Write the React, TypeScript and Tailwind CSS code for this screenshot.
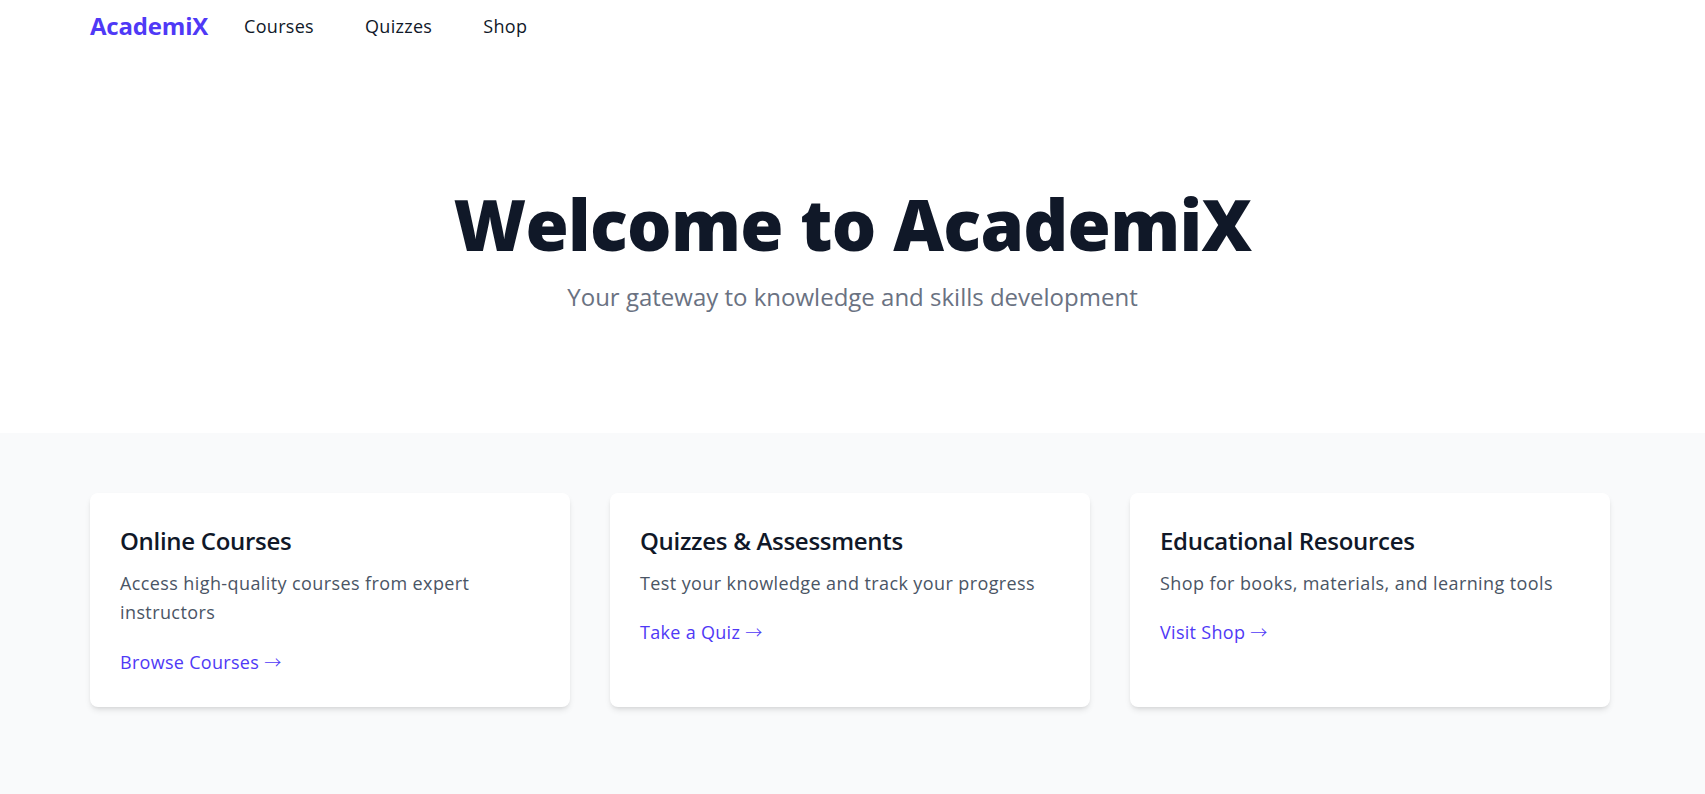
import React from "react";

const cards = [
  {
    title: "Online Courses",
    desc: "Access high-quality courses from expert instructors",
    link: "Browse Courses",
  },
  {
    title: "Quizzes & Assessments",
    desc: "Test your knowledge and track your progress",
    link: "Take a Quiz",
  },
  {
    title: "Educational Resources",
    desc: "Shop for books, materials, and learning tools",
    link: "Visit Shop",
  },
];

export default function App() {
  return (
    <div className="min-h-screen flex flex-col bg-white font-['Open_Sans',_'Noto_Sans',_sans-serif]">
      <nav className="flex items-center pl-[90px] pr-[95px] pt-[10px] pb-[10px]">
        <a className="text-2xl font-bold leading-8 text-indigo-600 tracking-[-0.2px]">AcademiX</a>
        <div className="ml-[36px] flex items-center gap-[51px] text-lg text-gray-900 tracking-[0.3px]">
          <a>Courses</a>
          <a>Quizzes</a>
          <a>Shop</a>
        </div>
      </nav>

      <section className="flex flex-col items-center pt-[137px] pb-[120px]">
        <h1 className="text-[70px] leading-none font-extrabold text-gray-900 tracking-[-0.01em]">
          Welcome to AcademiX
        </h1>
        <p className="mt-[22px] text-2xl leading-8 text-gray-500">
          Your gateway to knowledge and skills development
        </p>
      </section>

      <section className="flex-1 bg-gray-50 pt-[60px] pb-16">
        <div className="pl-[90px] pr-[95px] grid grid-cols-3 gap-10">
          {cards.map((c) => (
            <div key={c.title} className="bg-white rounded-lg shadow-md px-[30px] pt-8 pb-[31px]">
              <h3 className="text-2xl leading-8 font-semibold text-gray-900 mb-3 tracking-[-0.3px]">
                {c.title}
              </h3>
              <p className="text-lg leading-relaxed text-gray-600 mb-5 tracking-[0.4px]">{c.desc}</p>
              <a className="block text-lg leading-7 text-indigo-600 tracking-[0.3px]">
                {c.link}{" "}
                <span className="font-['Noto_Sans_CJK_SC',_sans-serif] font-light text-[17px] leading-none">→</span>
              </a>
            </div>
          ))}
        </div>
      </section>
    </div>
  );
}
